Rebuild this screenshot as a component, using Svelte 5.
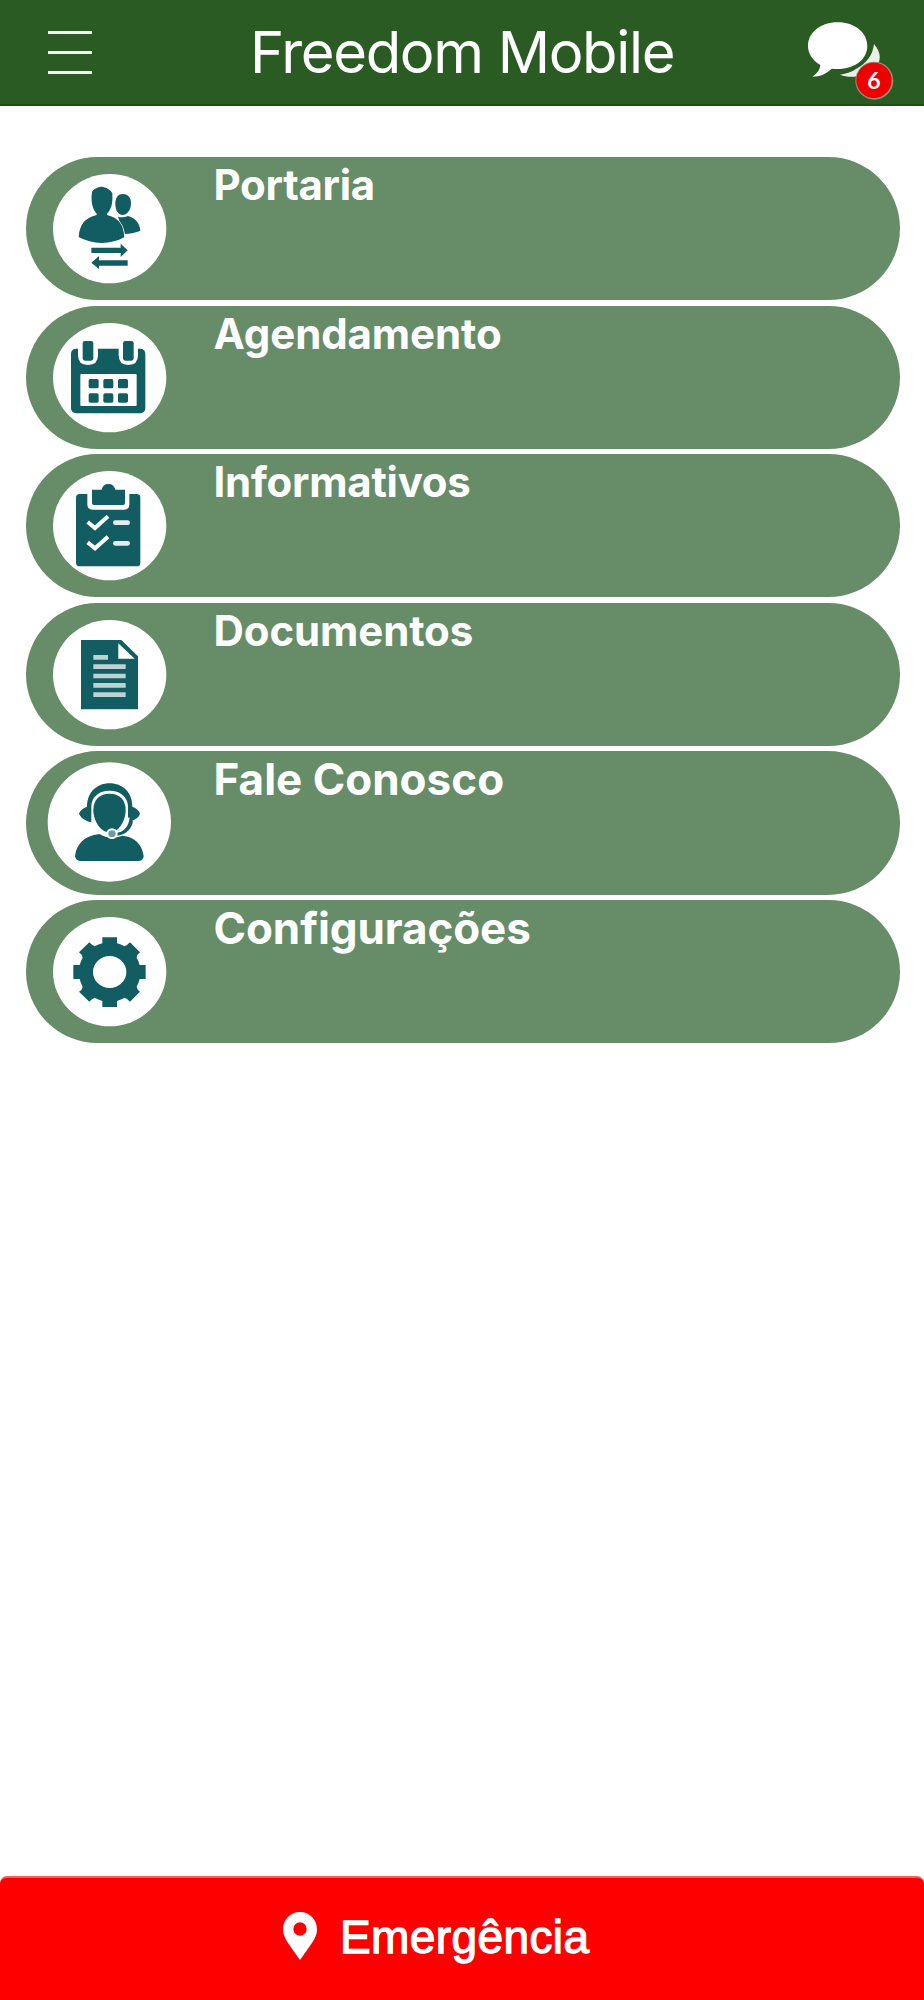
<script>
  const items = [
    { id: 'gate', label: 'Portaria', top: 20, size: 42, spacing: -0.3 },
    { id: 'calendar', label: 'Agendamento', top: 14, size: 42, spacing: -0.1 },
    { id: 'clipboard', label: 'Informativos', top: 10, size: 42, spacing: -0.25 },
    { id: 'document', label: 'Documentos', top: 8, size: 42, spacing: -0.1 },
    { id: 'support', label: 'Fale Conosco', top: 20, size: 44, spacing: 0 },
    { id: 'gear', label: 'Configurações', top: 14, size: 44, spacing: -0.1 }
  ];
</script>

<div class="screen">
  <header>
    <button class="menu" aria-label="Menu"><i></i><i></i><i></i></button>
    <h1>Freedom Mobile</h1>
    <button class="chat" aria-label="Mensagens">
      <svg viewBox="1032 60 270 246" width="90" height="82">
        <path fill="#e9efe8" d="M1236 132C1260 160 1260 190 1232 206Q1236 222 1248 232Q1220 232 1202 222C1180 234 1156 232 1134 224Q1164 220 1182 207C1214 190 1232 166 1236 132Z" />
        <path fill="#fff" d="M1127 67C1178 67 1216 98 1216 138C1216 178 1178 207 1127 207Q1117 207 1109 206Q1085 230 1051 230Q1074 215 1075 195C1052 182 1038 161 1038 138C1038 98 1076 67 1127 67Z" />
        <circle cx="1237" cy="242" r="57" fill="#8f8f7a" />
        <circle cx="1236" cy="241" r="53" fill="#ee0000" />
      </svg>
      <span class="badge">6</span>
    </button>
  </header>

  <nav>
    {#each items as item}
      <a class="pill" href="#{item.id}">
        <svg viewBox="18 {item.top} 432 430" width="144" height="143.33">
          {#if item.id === 'support'}
            <ellipse cx="268" cy="233" rx="185" ry="179" fill="#fff" />
          {:else}
            <ellipse cx="269" cy={item.top + 215} rx="170" ry="164" fill="#fff" />
          {/if}
          {#if item.id === 'gate'}
            <g fill="#125d62">
              <path d="M308 131C326 131 334 144 333 162C332 181 320 194 308 194C296 194 286 181 286 162C286 144 292 131 308 131Z" />
              <path d="M294 199Q308 204 324 197C348 203 359 220 361 241Q342 250 312 251Z" />
              <path stroke="#fff" stroke-width="5" paint-order="stroke" d="M245 109C255 109 276 120 277 130C279 160 273 178 261 190V194C295 202 311 222 313 261Q284 277 245 278Q206 277 176 260C179 222 194 203 230 194V190C217 178 212 151 216 126C218 117 235 109 245 109Z" />
              <path d="M214 292H302V280L323 300L302 320V308H214Z" />
              <path d="M323 330H237V317L214 337L237 356V346H323Z" />
            </g>
          {:else if item.id === 'calendar'}
            <rect x="153" y="142" width="223" height="194" rx="15" fill="#125d62" />
            <rect x="181" y="218" width="169" height="96" rx="3" fill="#fff" />
            <path d="M174 136V162Q174 191 204 191Q234 191 234 162V136ZM296 136V162Q296 191 325 191Q354 191 354 162V136Z" fill="#fff" />
            <g fill="#125d62">
              <rect x="188" y="119" width="32" height="59" rx="7" />
              <rect x="309" y="119" width="32" height="59" rx="7" />
              {#each [206, 250, 294] as x}
                {#each [233, 276] as y}
                  <rect {x} {y} width="30" height="28" rx="5" />
                {/each}
              {/each}
            </g>
          {:else if item.id === 'clipboard'}
            <rect x="168" y="130" width="193" height="217" rx="11" fill="#125d62" />
            <path d="M202 126V161Q202 177 218 177H312Q328 177 328 161V126Z" fill="#fff" />
            <path d="M216 117H245Q248 100 265 100Q282 100 286 117H315V157Q315 163 309 163H222Q216 163 216 157Z" fill="#125d62" />
            <path d="M203 214L225 232L264 197M203 275L225 293L264 258" fill="none" stroke="#fff" stroke-width="12" />
            <path d="M286 216H323M286 278H323" stroke="#e4eeee" stroke-width="14" stroke-linecap="round" />
          {:else if item.id === 'document'}
            <path d="M183 119H304L354 168V327H183Z" fill="#125d62" />
            <path d="M295 129L344 175H295Z" fill="#fff" />
            <path d="M220 171H264M220 199H317M220 227H317M220 255H317M220 283H317" stroke="#bcd2d3" stroke-width="14" />
          {:else if item.id === 'support'}
            <g fill="#125d62">
              <path d="M201 187C202 142 232 117 269 117C307 117 337 143 337 187Q356 194 360 208Q356 221 337 229C332 254 316 270 289 272L280 262C305 260 320 248 324 225V184C322 157 300 139 269 139C237 139 216 157 214 184V234Q205 233 201 230Q183 222 177 208Q182 194 201 187Z" />
              <path d="M269 148C298 148 317 166 317 197C317 228 298 264 269 264C240 264 220 228 220 197C220 166 239 148 269 148Z" />
              <path d="M165 336C169 301 190 275 238 269Q269 288 307 274C345 277 368 303 371 336Q369 350 357 350H180Q168 350 165 336Z" />
            </g>
            <path d="M326 220C323 246 308 261 286 266" fill="none" stroke="#fff" stroke-width="6" />
            <path d="M335 230C330 258 308 270 286 270" fill="none" stroke="#125d62" stroke-width="8" />
            <ellipse cx="276" cy="268" rx="14" ry="13" fill="#6d9c9f" stroke="#fff" stroke-width="6" />
          {:else}
            <path fill="#125d62" fill-rule="evenodd" d="M247 126H291V144Q304 147 313 153Q322 150 330 141L360 171Q350 178 350 187Q356 197 359 209H377V251H359Q356 264 350 274Q352 283 360 289L330 319Q322 310 314 307Q303 313 291 317V335H247V317Q234 313 224 307Q216 310 208 319L177 289Q187 283 188 274Q182 263 179 251H160V209H179Q182 197 188 187Q187 178 177 171L208 141Q216 150 224 153Q235 147 247 144ZM269 182A50 48 0 1 0 269 278A50 48 0 1 0 269 182Z" />
          {/if}
        </svg>
        <span class="label" style:font-size="{item.size}px" style:letter-spacing="{item.spacing}px">{item.label}</span>
      </a>
    {/each}
  </nav>

  <button class="emergency">
    <svg viewBox="0 0 102 144" width="34" height="48">
      <path fill="#fff" fill-rule="evenodd" d="M51 0C80 0 102 23 102 52C102 78 84 97 51 144C18 97 0 78 0 52C0 23 22 0 51 0ZM51 31A20 20 0 1 0 51 71A20 20 0 1 0 51 31Z" />
    </svg>
    <span>Emergência</span>
  </button>
</div>

<style>
  :global(body) { margin: 0; background: #fff; }
  .screen {
    width: 924px;
    height: 2000px;
    display: flex;
    flex-direction: column;
    overflow: hidden;
    background: #fff;
    font-family: Inter, "Liberation Sans", sans-serif;
    color: #fff;
  }
  button { border: 0; padding: 0; margin: 0; background: none; color: inherit; }
  header {
    height: 106px;
    flex: none;
    box-sizing: border-box;
    display: flex;
    background: #295b23;
    border-bottom: 2px solid #1b5010;
  }
  .menu {
    width: 44px;
    height: 43px;
    margin: 31px 0 0 48px;
    display: flex;
    flex-direction: column;
    justify-content: space-between;
  }
  .menu i { height: 3px; width: 44px; background: #f3f6f2; }
  h1 {
    margin: 0 0 0 158px;
    font-size: 58px;
    line-height: 105px;
    font-weight: 400;
    letter-spacing: -1.35px;
    white-space: nowrap;
  }
  .chat { position: relative; width: 90px; height: 82px; margin: 20px 28px 0 auto; }
  .chat svg { display: block; }
  .badge {
    position: absolute;
    left: 58px;
    top: 47px;
    width: 20px;
    font: 700 23px/26px Lato, sans-serif;
    text-align: center;
  }
  nav {
    margin: 51px 24px 0 26px;
    display: flex;
    flex-direction: column;
    gap: 5.4px;
  }
  .pill {
    height: 143.2px;
    display: flex;
    background: #668d68;
    border-radius: 72px;
    color: #fff;
    text-decoration: none;
  }
  .pill svg { flex: none; overflow: visible; }
  .label {
    margin-left: 43.5px;
    line-height: 56.5px;
    font-weight: 700;
    white-space: nowrap;
  }
  .emergency {
    height: 124px;
    margin-top: auto;
    box-sizing: border-box;
    border-top: 2px solid #ff5c5c;
    border-radius: 7px 7px 0 0;
    background: #fe0000;
    display: flex;
    align-items: flex-start;
    padding: 34px 0 0 283px;
    gap: 23px;
    font: 400 46px/50px "Liberation Sans", Arial, sans-serif;
    letter-spacing: 0.4px;
    -webkit-text-stroke: 1.3px #fff;
  }
</style>
